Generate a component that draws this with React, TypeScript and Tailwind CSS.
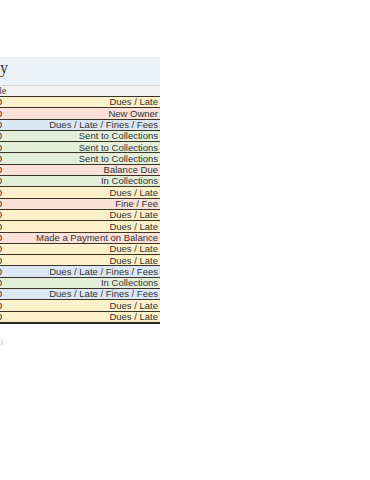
const rows: { label: string; bg: string }[] = [
  { label: 'Dues / Late', bg: 'bg-[#fdf1cb]' },
  { label: 'New Owner', bg: 'bg-[#fbe1d7]' },
  { label: 'Dues / Late / Fines / Fees', bg: 'bg-[#dce7f4]' },
  { label: 'Sent to Collections', bg: 'bg-[#e3efd9]' },
  { label: 'Sent to Collections', bg: 'bg-[#e3efd9]' },
  { label: 'Sent to Collections', bg: 'bg-[#e3efd9]' },
  { label: 'Balance Due', bg: 'bg-[#fbe1d7]' },
  { label: 'In Collections', bg: 'bg-[#e3efd9]' },
  { label: 'Dues / Late', bg: 'bg-[#fdf1cb]' },
  { label: 'Fine / Fee', bg: 'bg-[#fbe1d7]' },
  { label: 'Dues / Late', bg: 'bg-[#fdf1cb]' },
  { label: 'Dues / Late', bg: 'bg-[#fdf1cb]' },
  { label: 'Made a Payment on Balance', bg: 'bg-[#fbe1d7]' },
  { label: 'Dues / Late', bg: 'bg-[#fdf1cb]' },
  { label: 'Dues / Late', bg: 'bg-[#fdf1cb]' },
  { label: 'Dues / Late / Fines / Fees', bg: 'bg-[#dce7f4]' },
  { label: 'In Collections', bg: 'bg-[#e3efd9]' },
  { label: 'Dues / Late / Fines / Fees', bg: 'bg-[#dce7f4]' },
  { label: 'Dues / Late', bg: 'bg-[#fdf1cb]' },
  { label: 'Dues / Late', bg: 'bg-[#fdf1cb]' },
];

export default function App() {
  return (
    <div className="w-[370px] h-[480px] bg-white overflow-hidden pt-[57px]">
      <div className="w-[160px] flex flex-col">
        <div className="h-[28px] bg-[#edf2f9] flex items-center overflow-hidden">
          <span className="font-['Liberation_Serif',serif] text-[16px] text-[#333] leading-none -mt-[6px]">y</span>
        </div>
        <div className="h-[11px] bg-[#f2f2f2] border-t border-[#d8d8d8] flex items-center overflow-hidden">
          <span className="font-['Liberation_Serif',serif] text-[10px] text-[#444] leading-none -ml-[1px]">le</span>
        </div>
        {rows.map((r, i) => (
          <div
            key={i}
            className={`h-[11.3px] ${r.bg} border-t border-[#3a3426] flex items-center overflow-hidden font-['Liberation_Sans',sans-serif] text-[9.5px] text-[#333] leading-none`}
          >
            <div className="w-[2px] flex justify-end overflow-hidden shrink-0">
              <span className="text-[#222]">0</span>
            </div>
            <div className="flex-1 text-right pr-[2px] whitespace-nowrap">{r.label}</div>
          </div>
        ))}
        <div className="h-[2px] bg-[#2e2a20]" />
      </div>
      <div className="mt-[14px] w-[3px] overflow-hidden font-['Liberation_Sans',sans-serif] text-[9px] text-[#bbb] leading-none">
        <div className="flex justify-end">i</div>
      </div>
    </div>
  );
}
